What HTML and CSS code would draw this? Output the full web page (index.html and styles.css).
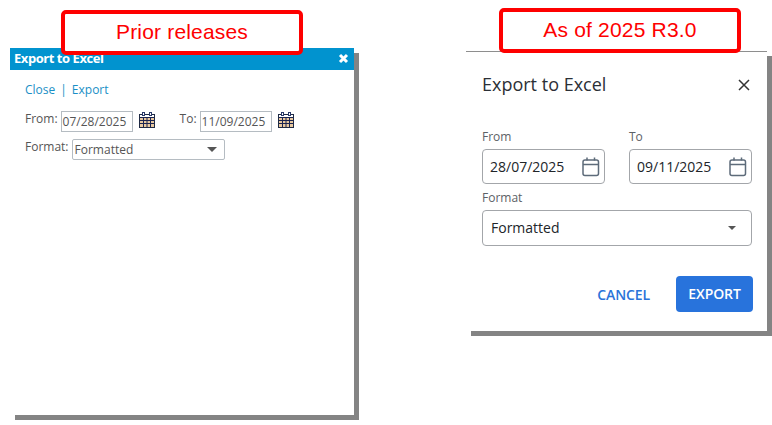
FILE: index.html
```html
<!DOCTYPE html>
<html lang="en">
<head>
    <meta charset="UTF-8">
    <title>Export to Excel</title>
    <link rel="stylesheet" href="styles.css">
</head>
<body>
    <!-- Prior releases dialog -->
    <div class="window old-dialog">
        <div class="old-header">
            <span class="old-title">Export to Excel</span>
            <svg class="old-close" width="11" height="11" viewBox="0 0 11 11"><path d="M2 2l7 7M9 2l-7 7" stroke="#fff" stroke-width="3" fill="none"/></svg>
        </div>
        <div class="old-body">
            <div class="old-links">
                <a>Close</a><span class="old-sep">|</span><a>Export</a>
            </div>
            <div class="old-row">
                <label class="old-label">From:</label>
                <div class="old-input">07/28/2025</div>
                <svg class="old-cal" width="17" height="17" viewBox="0 0 17 17">
                    <use href="#cal-old"/>
                </svg>
                <label class="old-label old-label-to">To:</label>
                <div class="old-input">11/09/2025</div>
                <svg class="old-cal" width="17" height="17" viewBox="0 0 17 17">
                    <use href="#cal-old"/>
                </svg>
            </div>
            <div class="old-row old-row-format">
                <label class="old-label">Format:</label>
                <div class="old-select">
                    <span>Formatted</span>
                    <span class="old-caret"></span>
                </div>
            </div>
        </div>
    </div>

    <!-- As of 2025 R3.0 dialog -->
    <div class="window new-dialog">
        <div class="new-header">
            <span class="new-title">Export to Excel</span>
            <svg class="new-close" width="12" height="12" viewBox="0 0 12 12"><path d="M1 1l10 10M11 1L1 11" stroke="#333" stroke-width="1.5" fill="none"/></svg>
        </div>
        <div class="new-dates">
            <div class="new-field">
                <label class="new-label">From</label>
                <div class="new-input">
                    <span>28/07/2025</span>
                    <svg width="18" height="20" viewBox="0 0 18 20"><use href="#cal-new"/></svg>
                </div>
            </div>
            <div class="new-field">
                <label class="new-label">To</label>
                <div class="new-input">
                    <span>09/11/2025</span>
                    <svg width="18" height="20" viewBox="0 0 18 20"><use href="#cal-new"/></svg>
                </div>
            </div>
        </div>
        <label class="new-label new-label-format">Format</label>
        <div class="new-select">
            <span>Formatted</span>
            <span class="new-caret"></span>
        </div>
        <div class="new-actions">
            <span class="btn-cancel">CANCEL</span>
            <span class="btn-export">EXPORT</span>
        </div>
    </div>

    <div class="callout callout-prior">Prior releases</div>
    <div class="callout callout-new">As of 2025 R3.0</div>

    <svg class="defs" width="0" height="0">
        <defs>
            <g id="cal-old">
                <rect x="0.500" y="2.500" width="15" height="13" fill="#fff" stroke="#1f2a44"/>
                <rect x="1" y="6" width="14" height="9" fill="#e8c9a0"/>
                <path d="M1 5.500h14M1 8.500h14M1 11.500h14M4.500 6v9M8 6v9M11.500 6v9" stroke="#1b2450" stroke-width="1" fill="none"/>
                <rect x="3.500" y="0.500" width="2" height="3" fill="#fff" stroke="#2a3a6a" stroke-width="1"/>
                <rect x="10.500" y="0.500" width="2" height="3" fill="#fff" stroke="#2a3a6a" stroke-width="1"/>
            </g>
            <g id="cal-new" fill="none" stroke="#5d6b7a" stroke-width="1.500">
                <rect x="1" y="3" width="15.500" height="15.500" rx="2"/>
                <path d="M1 7.500h15.500M5 0.500v3M12.500 0.500v3"/>
            </g>
        </defs>
    </svg>
</body>
</html>
```

FILE: styles.css
```css
body {
    margin: 0;
    width: 772px;
    height: 425px;
    position: relative;
    overflow: hidden;
    background: #fff;
    font-family: 'Open Sans', sans-serif;
}

.window {
    position: absolute;
    box-sizing: border-box;
    background: #fff;
    box-shadow: 5px 5px 0 #848484;
}

.defs {
    position: absolute;
}

/* callouts */
.callout {
    position: absolute;
    box-sizing: border-box;
    width: 242px;
    height: 45px;
    border: 4px solid #fe0000;
    border-radius: 5px;
    padding-bottom: 2px;
    background: #fff;
    color: #fe0000;
    font-family: 'Liberation Sans', sans-serif;
    font-size: 21px;
    letter-spacing: 0.18px;
    display: flex;
    justify-content: center;
    align-items: center;
}

.callout-prior {
    left: 61px;
    top: 10px;
}

.callout-new {
    left: 499px;
    top: 8px;
}

/* old dialog */
.old-dialog {
    left: 10px;
    top: 48px;
    width: 344px;
    height: 367px;
}

.old-header {
    height: 22px;
    background: #0193cf;
    color: #fff;
    display: flex;
    justify-content: space-between;
    align-items: center;
    padding: 0 5px 3px 4px;
    box-sizing: border-box;
}

.old-title {
    font-size: 13px;
    font-weight: 700;
    letter-spacing: -0.45px;
}

.old-close {
    margin-top: 2px;
}

.old-body {
    padding: 12px 15px;
    font-size: 12px;
    color: #555;
}

.old-links {
    color: #1a8fc6;
    line-height: 16px;
    display: flex;
    gap: 5px;
    margin-bottom: 13px;
}

.old-row {
    display: flex;
    align-items: flex-start;
    height: 21px;
}

.old-row-format {
    margin-top: 7px;
}

.old-label {
    line-height: 16px;
    margin-right: 3px;
}

.old-label-to {
    margin-left: 24px;
}

.old-input {
    box-sizing: border-box;
    width: 72px;
    height: 21px;
    border: 1px solid #b5bcc2;
    padding-left: 1px;
    line-height: 20px;
}

.old-cal {
    margin: 1px 0 0 6px;
}

.old-select {
    box-sizing: border-box;
    width: 153px;
    height: 21px;
    border: 1px solid #b5bcc2;
    border-radius: 2px;
    padding: 0 7px 0 2px;
    line-height: 19px;
    display: flex;
    justify-content: space-between;
    align-items: center;
}

.old-caret {
    width: 0;
    height: 0;
    border-left: 5px solid transparent;
    border-right: 5px solid transparent;
    border-top: 5px solid #555;
}

/* new dialog */
.new-dialog {
    left: 466px;
    top: 51px;
    width: 301px;
    height: 280px;
    border-top: 1px solid #8e8e8e;
    padding: 0 15px 0 16px;
    color: #212529;
}

.new-header {
    height: 65px;
    display: flex;
    justify-content: space-between;
    align-items: center;
    margin-bottom: 12px;
}

.new-title {
    font-size: 18px;
    color: #2b2f36;
    margin-top: -1px;
}

.new-close {
    margin-right: 2px;
}

.new-dates {
    display: flex;
    gap: 24px;
}

.new-field {
    width: 123px;
}

.new-label {
    display: block;
    font-size: 12px;
    line-height: 16px;
    color: #5c6166;
    margin-bottom: 4px;
}

.new-label-format {
    margin-top: 6px;
}

.new-input,
.new-select {
    box-sizing: border-box;
    border: 1px solid #a3a6aa;
    border-radius: 4px;
    display: flex;
    justify-content: space-between;
    align-items: center;
    font-size: 14px;
}

.new-input {
    height: 35px;
    padding: 0 4px 0 7px;
}

.new-select {
    height: 36px;
    padding: 0 15px 2px 8px;
}

.new-caret {
    width: 0;
    height: 0;
    border-left: 4px solid transparent;
    border-right: 4px solid transparent;
    border-top: 4px solid #555;
    margin-top: 2px;
}

.new-actions {
    display: flex;
    justify-content: flex-end;
    align-items: center;
    gap: 26px;
    margin: 30px -1px 0 0;
    font-size: 14px;
    font-weight: 600;
    letter-spacing: -0.1px;
}

.btn-cancel {
    color: #2a73d9;
}

.btn-export {
    width: 77px;
    height: 36px;
    line-height: 36px;
    text-align: center;
    border-radius: 4px;
    background: #2873dc;
    color: #fff;
}
```
